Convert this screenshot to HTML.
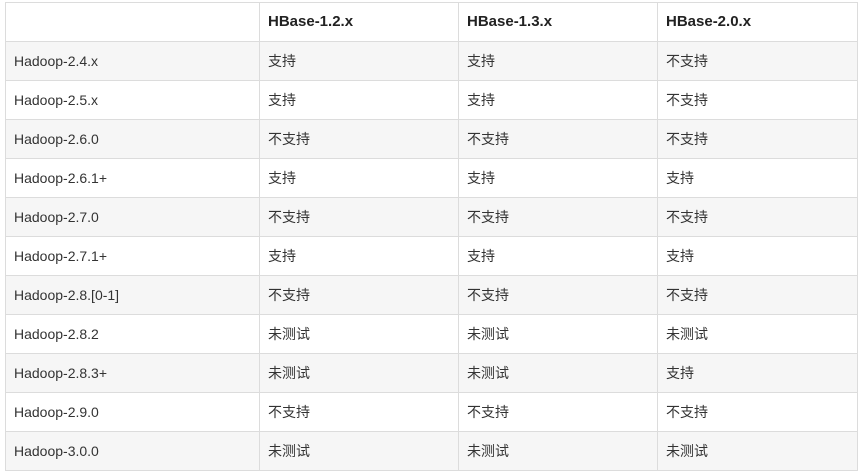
<!DOCTYPE html>
<html><head><meta charset="utf-8"><style>
html,body{margin:0;padding:0;background:#fff;width:866px;height:476px;overflow:hidden}
table{position:absolute;left:5px;top:2px;border-collapse:collapse;table-layout:fixed;font-family:"Liberation Sans","Noto Sans CJK SC",sans-serif;font-size:14px;line-height:20px;color:#333}
td,th{border:1px solid #dcdcdc;height:38px;padding:0 0 0 8px;text-align:left;vertical-align:middle;white-space:nowrap}
th{font-weight:bold;font-size:15px;color:#222}
tbody tr:nth-child(odd) td{background:#f6f6f6}
</style></head><body>
<table>
<colgroup><col style="width:254px"><col style="width:199px"><col style="width:199px"><col style="width:200px"></colgroup>
<thead><tr><th></th><th>HBase-1.2.x</th><th>HBase-1.3.x</th><th>HBase-2.0.x</th></tr></thead>
<tbody>
<tr><td>Hadoop-2.4.x</td><td>支持</td><td>支持</td><td>不支持</td></tr>
<tr><td>Hadoop-2.5.x</td><td>支持</td><td>支持</td><td>不支持</td></tr>
<tr><td>Hadoop-2.6.0</td><td>不支持</td><td>不支持</td><td>不支持</td></tr>
<tr><td>Hadoop-2.6.1+</td><td>支持</td><td>支持</td><td>支持</td></tr>
<tr><td>Hadoop-2.7.0</td><td>不支持</td><td>不支持</td><td>不支持</td></tr>
<tr><td>Hadoop-2.7.1+</td><td>支持</td><td>支持</td><td>支持</td></tr>
<tr><td>Hadoop-2.8.[0-1]</td><td>不支持</td><td>不支持</td><td>不支持</td></tr>
<tr><td>Hadoop-2.8.2</td><td>未测试</td><td>未测试</td><td>未测试</td></tr>
<tr><td>Hadoop-2.8.3+</td><td>未测试</td><td>未测试</td><td>支持</td></tr>
<tr><td>Hadoop-2.9.0</td><td>不支持</td><td>不支持</td><td>不支持</td></tr>
<tr><td>Hadoop-3.0.0</td><td>未测试</td><td>未测试</td><td>未测试</td></tr>
</tbody></table>
</body></html>
